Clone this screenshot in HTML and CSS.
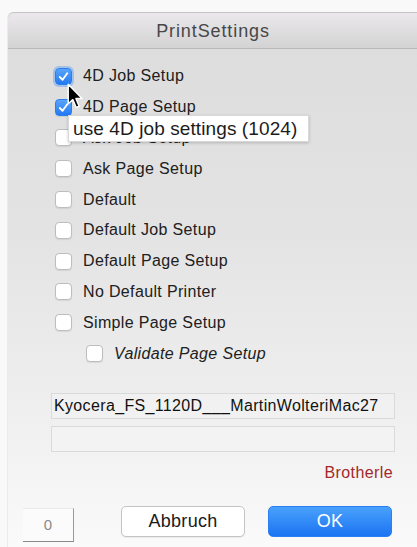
FILE: index.html
```html
<!DOCTYPE html>
<html lang="de">
<head>
<meta charset="utf-8">
<title>PrintSettings</title>
<link rel="stylesheet" href="styles.css">
</head>
<body>
<div class="window">
  <div class="titlebar">PrintSettings</div>
  <div class="content">
    <ul class="options">
      <li class="opt"><span class="box checked focus"><svg viewBox="0 0 16 16"><path d="M4 8.5 L7 11.5 L12 4.5" /></svg></span><span class="lbl">4D Job Setup</span></li>
      <li class="opt"><span class="box checked"><svg viewBox="0 0 16 16"><path d="M4 8.5 L7 11.5 L12 4.5" /></svg></span><span class="lbl">4D Page Setup</span></li>
      <li class="opt"><span class="box"></span><span class="lbl">Ask Job Setup</span></li>
      <li class="opt"><span class="box"></span><span class="lbl">Ask Page Setup</span></li>
      <li class="opt"><span class="box"></span><span class="lbl">Default</span></li>
      <li class="opt"><span class="box"></span><span class="lbl">Default Job Setup</span></li>
      <li class="opt"><span class="box"></span><span class="lbl">Default Page Setup</span></li>
      <li class="opt"><span class="box"></span><span class="lbl">No Default Printer</span></li>
      <li class="opt"><span class="box"></span><span class="lbl">Simple Page Setup</span></li>
      <li class="opt sub"><span class="box"></span><span class="lbl italic">Validate Page Setup</span></li>
    </ul>

    <div class="field">Kyocera_FS_1120D___MartinWolteriMac27</div>
    <div class="field"></div>

    <div class="printer">Brotherle</div>

    <div class="buttons">
      <div class="counter">0</div>
      <button class="btn cancel">Abbruch</button>
      <button class="btn ok">OK</button>
    </div>

    <div class="tooltip">use 4D job settings (1024)</div>
    <svg class="cursor" viewBox="0 0 14 22" width="17" height="27">
      <path d="M1 1 L1 17 L4.8 13.6 L7.6 20 L10 19 L7.3 12.7 L12.4 12.7 Z" />
    </svg>
  </div>
</div>
</body>
</html>
```

FILE: styles.css
```css
html, body {
  margin: 0;
  padding: 0;
}

body {
  background: #f9f9f9;
  font-family: "Liberation Sans", Arial, sans-serif;
  color: #222;
  overflow: hidden;
}

.window {
  margin: 12px 0 0 7px;
  width: 410px;
  height: 535px;
  border-top-left-radius: 6px;
  border-left: 1px solid #ececec;
  background: linear-gradient(#dcdcdc 0%, #e3e3e3 40%, #efefef 75%, #fafafa 100%);
}

.titlebar {
  height: 35px;
  border-top: 1px solid #c4c4c4;
  border-bottom: 1px solid #b9b9b9;
  border-top-left-radius: 6px;
  background: linear-gradient(#eae8ea, #d4d3d4);
  text-align: center;
  line-height: 36px;
  font-size: 18px;
  letter-spacing: 0.9px;
  color: #474747;
}

.content {
  position: relative;
  padding: 12px 23px 0 42px;
}

.options {
  list-style: none;
  margin: 0;
  padding: 0 0 0 5px;
}

.opt {
  height: 30.8px;
  display: flex;
  align-items: center;
  gap: 11px;
}

.opt.sub {
  padding-left: 31px;
}

.box {
  width: 17px;
  height: 17px;
  flex: none;
  box-sizing: border-box;
  border: 1px solid #bdbdbd;
  border-radius: 4px;
  background: #fff;
  box-shadow: 0 1px 1px rgba(0, 0, 0, 0.08);
  display: flex;
  align-items: center;
  justify-content: center;
}

.box svg {
  width: 15px;
  height: 15px;
}

.box path {
  fill: none;
  stroke: #fff;
  stroke-width: 2;
  stroke-linecap: round;
  stroke-linejoin: round;
}

.box.checked {
  border-color: #2a7ef0;
  background: linear-gradient(#5aa5fb, #2279f1);
}

.box.focus {
  box-shadow: 0 0 0 2px rgba(88, 156, 245, 0.45);
}

.lbl {
  font-size: 16px;
  letter-spacing: 0.35px;
  color: #202020;
}

.lbl.italic {
  font-style: italic;
}

.field {
  margin: 24px 0 0 1px;
  height: 24px;
  border: 1px solid #dadada;
  background: #f1f1f1;
  font-size: 16px;
  letter-spacing: 0.35px;
  line-height: 24px;
  padding-left: 2px;
  color: #111;
  white-space: nowrap;
  overflow: hidden;
}

.field + .field {
  margin-top: 7px;
  background: #f3f3f3;
}

.printer {
  margin-top: 11px;
  text-align: right;
  padding-right: 2px;
  font-size: 16px;
  letter-spacing: 0.4px;
  line-height: 20px;
  color: #a3282b;
}

.buttons {
  margin: 23px 0 0 -27px;
  display: flex;
  align-items: flex-start;
}

.counter {
  margin-top: 2px;
  width: 50px;
  height: 32px;
  border-top: 1px solid #e9e9e9;
  border-right: 1px solid #9a9a9a;
  border-bottom: 1px solid #8a8a8a;
  background: #fbfbfb;
  text-align: center;
  line-height: 32px;
  font-size: 15px;
  color: #8a8a8a;
}

.btn {
  height: 31px;
  width: 124px;
  border-radius: 5px;
  font-family: "Liberation Sans", Arial, sans-serif;
  font-size: 18px;
  letter-spacing: 0.3px;
  padding: 0;
}

.cancel {
  margin-left: 47px;
  border: 1px solid #c4c4c4;
  background: #fff;
  color: #1a1a1a;
  box-shadow: 0 1px 1px rgba(0, 0, 0, 0.06);
}

.ok {
  margin-left: 23px;
  border: 1px solid #2a7ff3;
  background: linear-gradient(#49a1fc, #1b74f2);
  color: #fff;
}

/* hover tooltip for the first option */
.tooltip {
  position: absolute;
  left: 60px;
  top: 66px;
  width: 235px;
  height: 25px;
  padding-left: 4px;
  background: #fff;
  border: 1px solid #d8d8d8;
  box-shadow: 0 1px 3px rgba(0, 0, 0, 0.2);
  font-size: 19px;
  letter-spacing: 0.1px;
  line-height: 25px;
  color: #1c1c1c;
  white-space: nowrap;
}

.cursor {
  position: absolute;
  left: 59px;
  top: 34px;
}

.cursor path {
  fill: #000;
  stroke: #fff;
  stroke-width: 1.2;
  stroke-linejoin: round;
}
```
